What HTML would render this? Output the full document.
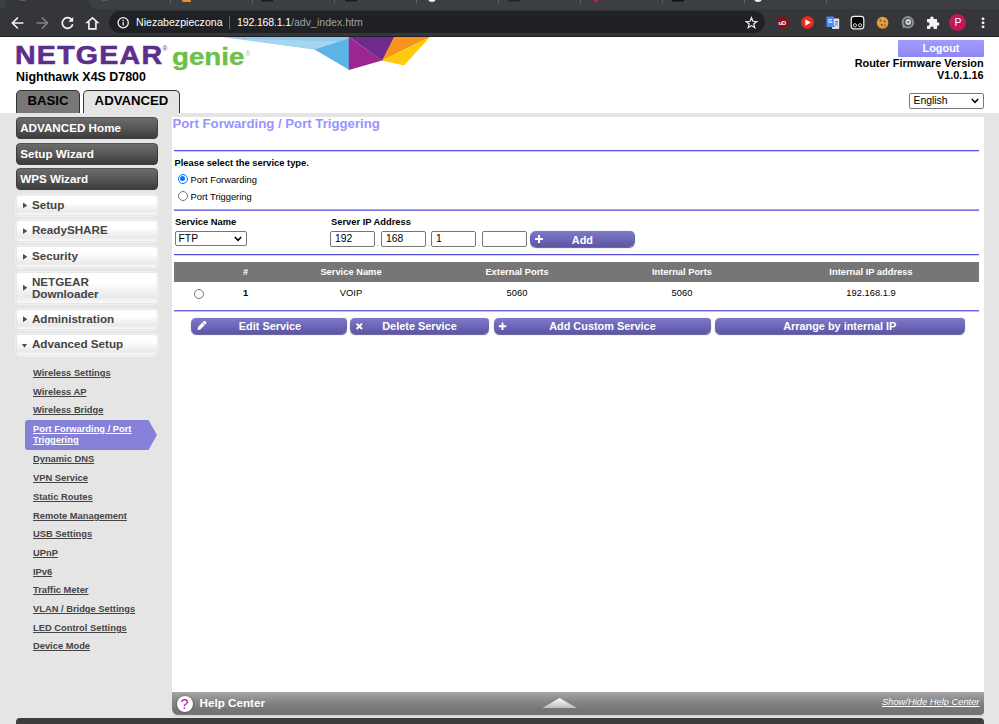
<!DOCTYPE html>
<html lang="pl">
<head>
<meta charset="utf-8">
<title>NETGEAR Router D7800</title>
<style>
*{box-sizing:border-box;margin:0;padding:0}
html,body{width:999px;height:724px;overflow:hidden;background:#fff}
body{position:relative;font-family:"Liberation Sans",sans-serif;color:#000}
.abs{position:absolute}
/* ---------- browser chrome ---------- */
#tabstrip{left:0;top:0;width:999px;height:9px;background:#35363a}
.tsl{top:0;height:8.5px;background:#3c4043}
#toolbar{left:0;top:8px;width:999px;height:29px;background:#35363a;border-bottom:1px solid #1f2023}
#omni{left:108.5px;top:11.4px;width:656.5px;height:22px;border-radius:11px;background:#202124}
.ctext{font-family:"Liberation Sans",sans-serif;font-size:10.6px;line-height:14px;white-space:nowrap;color:#fff;top:15.4px}
/* ---------- page ---------- */
#pagebg{left:0;top:113px;width:999px;height:611px;background:#e5e5e5}
#panel{left:172px;top:117px;width:812px;height:576px;background:#fff}

/* header */
#logo1{left:15.3px;top:41px;font-size:26px;line-height:28px;font-weight:bold;color:#5d2e8e;white-space:nowrap;letter-spacing:1.1px;transform-origin:0 0;transform:scaleX(1.1);-webkit-text-stroke:.55px #5d2e8e}
#logo2{left:172px;top:42.8px;font-size:23.5px;line-height:28px;font-weight:bold;color:#6cbf47;white-space:nowrap;letter-spacing:0;transform-origin:0 0;transform:scaleX(1.18);-webkit-text-stroke:.35px #6cbf47}
.reg{font-size:6.5px;line-height:7px;font-weight:normal}
#model{left:16px;top:70.3px;font-size:12.44px;line-height:14px;font-weight:bold;white-space:nowrap}
.tab{top:90px;height:24px;border:1.5px solid #333;border-bottom:none;border-radius:5px 5px 0 0;font-size:13.2px;line-height:20px;text-align:center;color:#000;font-weight:bold}
#tabB{left:16px;width:64px;background:#777}
#tabA{left:83px;width:97px;background:#e5e5e5}
#logout{left:898px;top:40px;width:86px;height:17px;background:linear-gradient(#a19bff,#8f88f3);color:#fff;font-weight:bold;font-size:10.9px;line-height:17px;text-align:center;border-radius:1px}
#fw{right:15.4px;top:57px;font-size:10.9px;line-height:12.4px;font-weight:bold;text-align:right;white-space:nowrap}
.sel{background:#fff;border:1px solid #767676;border-radius:2px;font-size:10.37px;white-space:nowrap}
/* sidebar */
.dk{left:15.6px;width:142.2px;height:22px;border-radius:4.5px;background:linear-gradient(#6c6c6c,#595959 45%,#3d3d3d);color:#fff;font-weight:bold;font-size:11.67px;line-height:19.2px;padding-left:3.6px;white-space:nowrap;border:1px solid #3c3c3c;border-top-color:#555}
.lt{left:14.8px;width:143.8px;height:23.6px;border-radius:5.5px;background:linear-gradient(#fff,#fff 35%,#e9e9e9 78%,#fcfcfc);color:#444;font-weight:bold;font-size:11.67px;line-height:20.4px;padding-left:16.1px;white-space:nowrap;border:1.8px solid #f1f1f1;box-shadow:inset 0 0 0 .8px #e1e1e1}
.lt i{position:absolute;left:6.8px;top:50%;margin-top:-3.3px;width:4.8px;height:6.4px;background:#505050;clip-path:polygon(0 0,100% 50%,0 100%)}
.lt i.dn{left:6px;margin-top:-1.4px;width:5.4px;height:4px;clip-path:polygon(0 0,100% 0,50% 100%)}
.sub{left:33px;font-size:9.33px;line-height:11px;font-weight:bold;color:#444;text-decoration:underline;white-space:nowrap}

/* content */
#title{left:172.5px;top:116px;font-size:13.2px;line-height:15px;font-weight:bold;color:#9893ff;white-space:nowrap}
.hr{left:174px;width:805px;height:2px}
.b9{font-size:9.33px;line-height:11px;font-weight:bold;white-space:nowrap}
.n9{font-size:9.33px;line-height:11px;white-space:nowrap}
.radio{width:10.4px;height:10.4px;border-radius:50%;border:1px solid #767676;background:#fff}
.radio.on{border-color:#0075ff}
.radio.on:after{content:"";position:absolute;left:1.7px;top:1.7px;width:5px;height:5px;border-radius:50%;background:#0075ff}
.inp{top:231.2px;width:45px;height:15.8px;border:1px solid #767676;border-radius:2px;background:#fff;font-size:10.37px;line-height:13.5px;padding-left:4px}
.btn{height:16.6px;background:linear-gradient(#7f79ca,#6d67b8 50%,#5c55a1);color:#fff;font-weight:bold;font-size:10.9px;line-height:17.8px;text-align:center;white-space:nowrap;border-radius:5px 4px 5.5px 5.5px;box-shadow:0 .6px .8px rgba(60,52,130,.8)}
.th{top:262px;height:20px;line-height:20px;color:#fff;font-size:9.33px;font-weight:bold;text-align:center;white-space:nowrap;width:140px;margin-left:-70px}
.td{top:287.5px;line-height:11px;font-size:9.33px;text-align:center;white-space:nowrap;width:140px;margin-left:-70px}
</style>
</head>
<body>
<!-- browser chrome -->
<div id="tabstrip" class="abs"></div>
<div id="toolbar" class="abs"></div>
<div class="abs tsl" style="left:0;width:5.5px;border-radius:0 0 5px 0"></div><div class="abs tsl" style="left:88.5px;width:911px;border-radius:0 0 0 7px"></div>
<div id="omni" class="abs"></div>

<!-- toolbar icons -->
<svg class="abs" style="left:0;top:0" width="999" height="38" viewBox="0 0 999 38">
  <!-- other tab hints -->
  <g fill="none" stroke="#5f6368" stroke-width="1">
    <path d="M170.5 0v3M252.5 0v3M334.5 0v3M416.5 0v3M498.5 0v3M580.5 0v3M662.5 0v3M744.5 0v3M826.5 0v3"/>
  </g>
  <rect x="19.5" y="0" width="6" height="1" fill="#5a5d61"/>
  <rect x="101.5" y="0" width="6" height="1" fill="#5a5d61"/>
  <rect x="182" y="0" width="9" height="2" rx="1" fill="#f28b1d"/>
  <rect x="261" y="0" width="12" height="1.5" fill="#1b1b1d"/>
  <rect x="345" y="0" width="12" height="1.5" fill="#1b1b1d"/>
  <circle cx="432" cy="-2" r="4" fill="#f1f3f4"/>
  <rect x="508" y="0" width="12" height="1.5" fill="#2a1f26"/>
  <circle cx="596" cy="0" r="2" fill="#e8162b"/>
  <rect x="672" y="0" width="12" height="1.5" fill="#111"/>
  <circle cx="758" cy="-2" r="4" fill="#f1f3f4"/>
  <g transform="translate(.4,.5)">
  <!-- back -->
  <g fill="none" stroke="#f1f3f4" stroke-width="1.7" stroke-linecap="butt" stroke-linejoin="miter">
    <path d="M23 22.5H12.5M17.5 17L12 22.5L17.5 28"/>
  </g>
  <!-- forward -->
  <g fill="none" stroke="#7d8084" stroke-width="1.7">
    <path d="M36 22.5H46.5M41.5 17L47 22.5L41.5 28"/>
  </g>
  <!-- reload -->
  <g fill="none" stroke="#f1f3f4" stroke-width="1.7">
    <path d="M71.3 19.2A5.3 5.3 0 1 0 72.3 23.8"/>
  </g>
  <path d="M72.8 16.5V21.3H68z" fill="#f1f3f4"/>
  <!-- home -->
  <path d="M92 17.3L86.8 22H88.5V28.4H95.5V22H97.2z" fill="none" stroke="#f1f3f4" stroke-width="1.6" stroke-linejoin="miter"/>
  </g>
  <!-- info -->
  <circle cx="123.2" cy="22.7" r="5.1" fill="none" stroke="#f1f3f4" stroke-width="1.3"/>
  <rect x="122.55" y="21.9" width="1.3" height="3.6" fill="#f1f3f4"/>
  <rect x="122.55" y="19.7" width="1.3" height="1.3" fill="#f1f3f4"/>
  <!-- separator -->
  <rect x="229" y="16" width="1" height="13" fill="#5f6368"/>
  <!-- star -->
  <path d="M751.5 17.6L752.91 21.26L756.83 21.47L753.78 23.94L754.79 27.73L751.5 25.6L748.21 27.73L749.22 23.94L746.17 21.47L750.09 21.26z" fill="none" stroke="#f1f3f4" stroke-width="1.2" stroke-linejoin="miter"/>
  <!-- ublock -->
  <path d="M777.1 18.1l5.7-1.9 5.7 1.9v4.6c0 3-2.4 5.2-5.7 6.5-3.3-1.3-5.7-3.5-5.7-6.5z" fill="#8b1014"/>
  <!-- red play circle -->
  <circle cx="807.5" cy="22.5" r="6.5" fill="#e8291c"/>
  <path d="M805.3 19.3v6.4l5.6-3.2z" fill="#fff"/>
  <!-- translate -->
  <rect x="832" y="18.5" width="7.2" height="10.5" rx=".8" fill="#dde1e6"/>
  <path d="M835 21.5h3M836.5 21v.5M837.7 21.6q-.5 2.5-2.7 3.9M835.3 22.8q.8 1.8 2.7 2.7" stroke="#33575f" stroke-width=".6" fill="none"/>
  <path d="M827.3 16.4h5.6q.9 0 .9.9v7.5l1.7 2.1h-8.2q-.9 0-.9-.9v-8.7q0-.9.9-.9z" fill="#4a8af4"/>
  <!-- dark square -->
  <rect x="851.2" y="16.3" width="12.6" height="12.6" rx="2.8" fill="#050505" stroke="#f1f3f4" stroke-width="1.2"/>
  <circle cx="854.9" cy="25.3" r="1.6" fill="none" stroke="#f1f3f4" stroke-width=".9"/>
  <circle cx="860.1" cy="25.3" r="1.6" fill="none" stroke="#f1f3f4" stroke-width=".9"/>
  <!-- cookie -->
  <circle cx="882.6" cy="22.6" r="5.8" fill="#e3a043"/><path d="M878 26a5.8 5.8 0 0 0 9.5 0" fill="none" stroke="#c67d27" stroke-width="1.2"/>
  <circle cx="880.5" cy="20.5" r="1" fill="#7a4a1c"/><circle cx="884.8" cy="21.5" r="1" fill="#7a4a1c"/><circle cx="881.8" cy="24.8" r="1" fill="#7a4a1c"/><circle cx="885" cy="25.2" r=".8" fill="#7a4a1c"/>
  <!-- gray circle -->
  <circle cx="907.9" cy="22.3" r="5.3" fill="#4a4c50" stroke="#8d9095" stroke-width="1.9"/><path d="M902.5 25l.6 3.6 3-1.8z" fill="#8d9095"/>
  <circle cx="908.3" cy="22" r="2.9" fill="#d0d2d5"/><circle cx="908.3" cy="22" r="1.1" fill="#6a6d71"/>
  <!-- puzzle -->
  <path d="M927 19h3.2a1.8 1.8 0 1 1 3.4 0H937v3.3a1.8 1.8 0 1 1 0 3.4V29h-3.3a1.8 1.8 0 1 0-3.4 0H927v-3.4a1.8 1.8 0 1 0 0-3.3z" fill="#f1f3f4"/>
  <!-- avatar -->
  <circle cx="957.5" cy="22.5" r="8.4" fill="#c2185b"/>
  <!-- menu dots -->
  <rect x="981.8" y="17.5" width="2.5" height="2.5" rx=".7" fill="#f1f3f4"/><rect x="981.8" y="21.6" width="2.5" height="2.5" rx=".7" fill="#f1f3f4"/><rect x="981.8" y="25.6" width="2.5" height="2.5" rx=".7" fill="#f1f3f4"/>
</svg>
<div class="abs ctext" style="left:136px">Niezabezpieczona</div>
<div class="abs ctext" style="left:237px"><span style="letter-spacing:-.18px">192.168.1.1</span><span style="color:#9aa0a6">/adv_index.htm</span></div>
<div class="abs" style="left:778.5px;top:19.5px;font-size:6px;font-weight:bold;color:#fff;line-height:6px;letter-spacing:-.3px">uD</div>
<div class="abs" style="left:827.9px;top:18px;font-size:5.5px;font-weight:bold;color:#fff;line-height:7px">G</div>
<div class="abs" style="left:954.4px;top:16.8px;font-size:10.4px;color:#fff;line-height:12px">P</div>


<!-- header -->
<svg class="abs" style="left:200px;top:37px" width="260" height="40" viewBox="200 37 260 40">
  <polygon points="222,37 350,37 350,41 314.5,49.5" fill="#8fcbea"/>
  <polygon points="240,38.8 350,41.5 314.5,49.5" fill="#a6d6ef"/>
  <polygon points="314.5,49.5 349.5,38.3 349.5,70" fill="#5bb4e5"/>
  <polygon points="349,37 394.5,37 382.5,61" fill="#70298d"/>
  <polygon points="348.8,37 348.8,70 382,60.5" fill="#9c258f"/>
  <polygon points="394,37 430,37 382,60.5" fill="#f7941e"/>
  <polygon points="382,60.5 430,37 404,65.5" fill="#ffcb08"/>
</svg>
<div id="logo1" class="abs">NETGEAR</div>
<div class="abs reg" style="left:162.6px;top:45px;color:#5d2e8e">®</div>
<div id="logo2" class="abs">genie</div>
<div class="abs reg" style="left:245.6px;top:49.5px;color:#8fd06f">®</div>
<div id="model" class="abs">Nighthawk X4S D7800</div>
<div id="tabB" class="abs tab">BASIC</div>
<div id="tabA" class="abs tab">ADVANCED</div>
<div id="logout" class="abs">Logout</div>
<div id="fw" class="abs">Router Firmware Version<br>V1.0.1.16</div>
<div class="abs sel" style="left:909px;top:92.5px;width:74.5px;height:16.5px;line-height:14.5px;padding-left:3.5px">English
  <svg class="abs" style="right:4px;top:4.5px" width="8" height="6" viewBox="0 0 8 6"><path d="M.8 1l3.2 3.3L7.2 1" fill="none" stroke="#000" stroke-width="1.5"/></svg>
</div>

<!-- page -->
<div id="pagebg" class="abs"></div>
<div id="panel" class="abs"></div>

<!-- content -->
<div class="abs hr" style="top:150px;background:linear-gradient(#5550d8 50%,#cccaf3 50%)"></div>
<div class="abs hr" style="top:209px;background:linear-gradient(#aaa8ec 50%,#7773e0 50%)"></div>
<div class="abs hr" style="top:254px;background:linear-gradient(#5550d8 50%,#d4d3f5 50%)"></div>
<div class="abs hr" style="top:310px;background:linear-gradient(#6e6ade 50%,#bbb9ef 50%)"></div>
<div id="title" class="abs">Port Forwarding / Port Triggering</div>
<div class="abs b9" style="left:174.5px;top:157.5px">Please select the service type.</div>
<div class="abs radio on" style="left:177.8px;top:173.5px"></div>
<div class="abs n9" style="left:190.5px;top:174.5px">Port Forwarding</div>
<div class="abs radio" style="left:177.8px;top:190.8px"></div>
<div class="abs n9" style="left:190.5px;top:191.8px">Port Triggering</div>
<div class="abs b9" style="left:175px;top:217px">Service Name</div>
<div class="abs b9" style="left:331px;top:217px">Server IP Address</div>
<div class="abs sel" style="left:174.5px;top:231px;width:72px;height:14.8px;line-height:14px;padding-left:3px">FTP
  <svg class="abs" style="right:3.5px;top:3.5px" width="8" height="6" viewBox="0 0 8 6"><path d="M.8 1l3.2 3.3L7.2 1" fill="none" stroke="#000" stroke-width="1.5"/></svg>
</div>
<div class="abs inp" style="left:330px">192</div>
<div class="abs n9" style="left:376.5px;top:238px;color:#b58aa8">.</div>
<div class="abs inp" style="left:381px">168</div>
<div class="abs n9" style="left:427px;top:238px;color:#b58aa8">.</div>
<div class="abs inp" style="left:431px">1</div>
<div class="abs n9" style="left:477.5px;top:238px;color:#b58aa8">.</div>
<div class="abs inp" style="left:481.7px"></div>
<div class="abs btn" style="left:530px;top:230.7px;width:104.8px;height:16.8px;line-height:18.2px;border-radius:6px 5px 6px 6px">Add</div>
<div class="abs" style="left:174px;top:262px;width:805px;height:20px;background:#767676"></div>
<div class="abs th" style="left:245.7px">#</div>
<div class="abs th" style="left:351px">Service Name</div>
<div class="abs th" style="left:517px">External Ports</div>
<div class="abs th" style="left:682px">Internal Ports</div>
<div class="abs th" style="left:871px">Internal IP address</div>
<div class="abs radio" style="left:193.5px;top:288.5px"></div>
<div class="abs td" style="left:245.7px;font-weight:bold">1</div>
<div class="abs td" style="left:351px">VOIP</div>
<div class="abs td" style="left:517px">5060</div>
<div class="abs td" style="left:682px">5060</div>
<div class="abs td" style="left:871px">192.168.1.9</div>
<div class="abs btn" style="left:191px;top:317.8px;width:156px;padding-left:2px">Edit Service</div>
<div class="abs btn" style="left:350px;top:317.8px;width:139px">Delete Service</div>
<div class="abs btn" style="left:493.7px;top:317.8px;width:217.5px">Add Custom Service</div>
<div class="abs btn" style="left:715px;top:317.8px;width:249.5px">Arrange by internal IP</div>
<svg class="abs" style="left:529.3px;top:230.4px" width="20" height="18" viewBox="0 0 20 18"><path d="M6.1 9h7.8M10 5.1v7.8" stroke="#fff" stroke-width="2.1" fill="none"/></svg>
<svg class="abs" style="left:493px;top:317px" width="20" height="18" viewBox="0 0 20 18"><path d="M5.8 9.3h7.4M9.5 5.6v7.4" stroke="#fff" stroke-width="1.9" fill="none"/></svg>
<svg class="abs" style="left:350px;top:317px" width="20" height="18" viewBox="0 0 20 18"><path d="M6.6 6.6l5.4 5.4M12 6.6l-5.4 5.4" stroke="#fff" stroke-width="1.9" fill="none"/></svg>
<svg class="abs" style="left:192px;top:317px" width="20" height="18" viewBox="0 0 20 18"><path d="M5.5 12.9L6 10L11.8 4.1Q12.6 3.6 13.4 4.3L14.2 5.2Q14.8 5.9 14.2 6.6L8.4 12.4z" fill="#fff"/><path d="M10.5 5.6l2.4 2.4" stroke="#6f69bb" stroke-width=".7"/></svg>
<!-- help bar -->
<div class="abs" style="left:172px;top:692px;width:812px;height:23px;border-radius:0 0 4px 6px;background:linear-gradient(#a6a6a6,#8a8a8a 35%,#767676 75%,#727272)"></div>
<div class="abs" style="left:172px;top:715px;width:812px;height:1.5px;background:#d8d8d8"></div>
<div class="abs" style="left:16px;top:717.5px;width:968px;height:8px;background:#3d3d3d;border-radius:4px 4px 0 0"></div>
<div class="abs" style="left:176.5px;top:695.5px;width:16px;height:16px;border-radius:50%;background:#fff;box-shadow:0 0 2px rgba(0,0,0,.5);color:#c800c8;font-size:14.5px;line-height:17px;text-align:center;font-weight:normal">?</div>
<div class="abs" style="left:199.5px;top:695.6px;font-size:11.67px;line-height:14px;font-weight:bold;color:#fff;white-space:nowrap">Help Center</div>
<svg class="abs" style="left:540px;top:696px" width="40" height="14" viewBox="0 0 40 14"><defs><linearGradient id="tg" x1="0" y1="0" x2="0" y2="1"><stop offset="0" stop-color="#fff"/><stop offset="1" stop-color="#bdbdbd"/></linearGradient></defs><path d="M19.6 2L37 12H2.5z" fill="url(#tg)"/></svg>
<div class="abs" style="left:882px;top:696.5px;font-size:9.33px;line-height:11px;font-style:italic;color:#fff;text-decoration:underline;white-space:nowrap">Show/Hide Help Center</div>

<!-- sidebar -->
<div class="abs dk" style="top:116.8px">ADVANCED Home</div>
<div class="abs dk" style="top:142.5px">Setup Wizard</div>
<div class="abs dk" style="top:168.2px">WPS Wizard</div>
<div class="abs lt" style="top:193.7px"><i></i>Setup</div>
<div class="abs lt" style="top:219.4px"><i></i>ReadySHARE</div>
<div class="abs lt" style="top:245.1px"><i></i>Security</div>
<div class="abs lt" style="top:270.6px;height:34.6px;line-height:12px;padding-top:4.7px;white-space:normal"><i></i>NETGEAR Downloader</div>
<div class="abs lt" style="top:307.6px"><i></i>Administration</div>
<div class="abs lt" style="top:333.3px"><i class="dn"></i>Advanced Setup</div>
<svg class="abs" style="left:25px;top:419.5px" width="133" height="30" viewBox="0 0 133 30"><path d="M3 0H123.5L132 15L123.5 30H3Q0 30 0 27V3Q0 0 3 0z" fill="#8581d9"/></svg>
<div class="abs sub" style="top:368px">Wireless Settings</div>
<div class="abs sub" style="top:387px">Wireless AP</div>
<div class="abs sub" style="top:405px">Wireless Bridge</div>
<div class="abs sub" style="top:454px">Dynamic DNS</div>
<div class="abs sub" style="top:473px">VPN Service</div>
<div class="abs sub" style="top:492px">Static Routes</div>
<div class="abs sub" style="top:511px">Remote Management</div>
<div class="abs sub" style="top:529px">USB Settings</div>
<div class="abs sub" style="top:548px">UPnP</div>
<div class="abs sub" style="top:567px">IPv6</div>
<div class="abs sub" style="top:585px">Traffic Meter</div>
<div class="abs sub" style="top:604px">VLAN / Bridge Settings</div>
<div class="abs sub" style="top:623px">LED Control Settings</div>
<div class="abs sub" style="top:641px">Device Mode</div>
<div class="abs sub" style="top:424px;color:#fff;width:118px;white-space:normal;line-height:11px">Port Forwarding / Port Triggering</div>
</body>
</html>
